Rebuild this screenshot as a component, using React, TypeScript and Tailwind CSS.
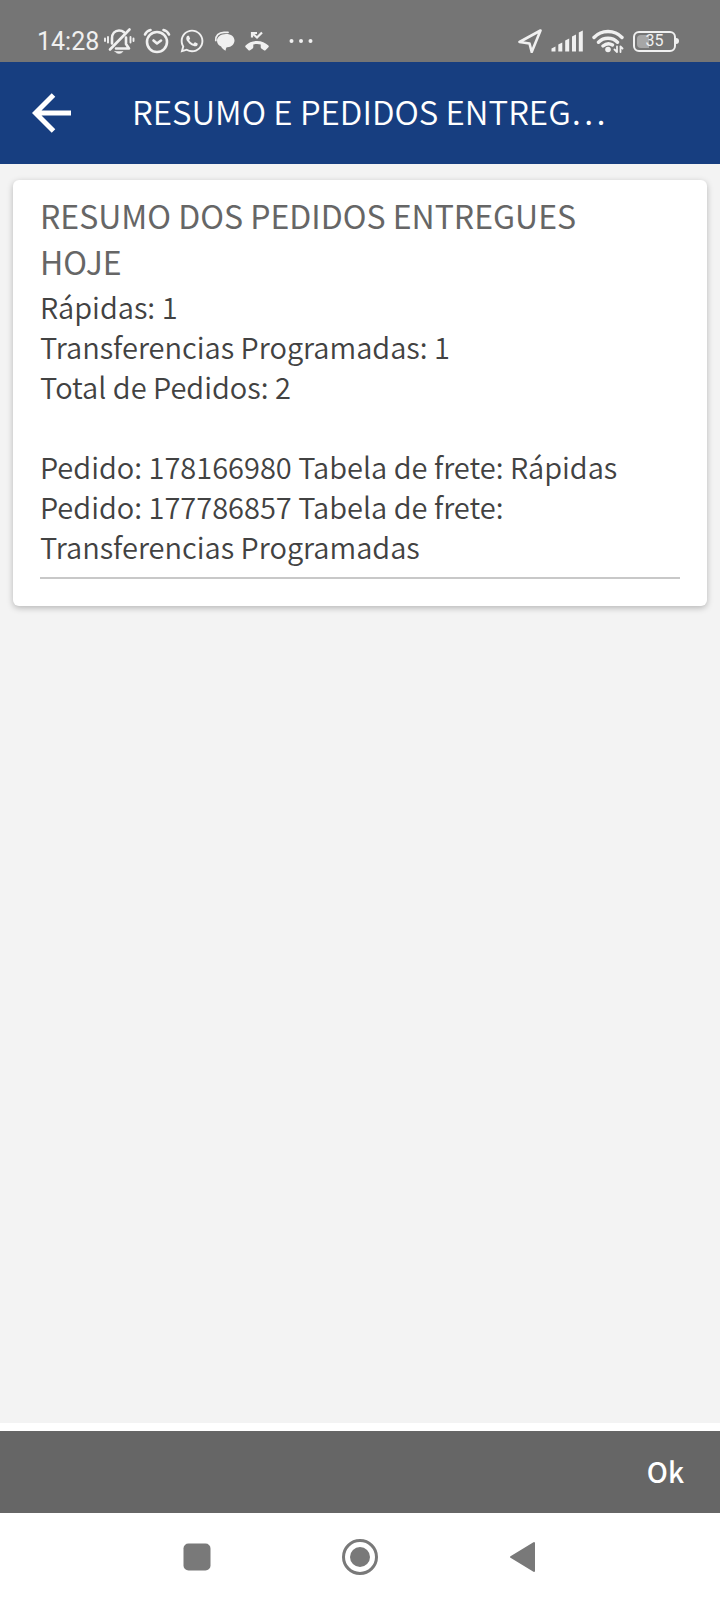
import type { ReactNode } from 'react';
import { FaWhatsapp } from 'react-icons/fa';

const summary = [
  { label: 'Rápidas', total: 1 },
  { label: 'Transferencias Programadas', total: 1 },
  { label: 'Total de Pedidos', total: 2 },
];

const orders = [
  { id: '178166980', table: 'Rápidas' },
  { id: '177786857', table: 'Transferencias Programadas' },
];

function Icon({ className, viewBox, children }: { className: string; viewBox: string; children: ReactNode }) {
  return (
    <svg
      className={className}
      viewBox={viewBox}
      fill="none"
      stroke="currentColor"
      strokeWidth="2.6"
      strokeLinecap="round"
      strokeLinejoin="round"
      aria-hidden="true"
    >
      {children}
    </svg>
  );
}

function BellOffIcon() {
  return (
    <Icon className="h-7 w-8 shrink-0" viewBox="0 0 32 28">
      <path d="M9 16.500V11.500C9 6.500 12 3.500 16 3.500c2 0 3.700.6 5 1.800M23 10.500v6.500l3 4.500H13" />
      <path d="M26.500 2.500 7 22.500" />
      <path d="M12 24.500h8c-1 1.300-2.500 2-4 2s-3-.7-4-2Z" fill="currentColor" strokeWidth="0.500" />
      <path d="M5 10v5.500M2 11.500v2.500M27.500 10v5.500M30.500 11.500v2.500" strokeWidth="1.900" />
    </Icon>
  );
}

function AlarmIcon() {
  return (
    <Icon className="h-7 w-7 shrink-0" viewBox="0 0 28 28">
      <circle cx="14" cy="15" r="10" />
      <path d="m10.500 13.500 3.500 3 4-3" />
      <path d="M2 7.500Q3.500 4 7.500 3M26 7.500Q24.500 4 20.500 3" />
    </Icon>
  );
}

function ChatIcon() {
  return (
    <Icon className="h-6 w-6 shrink-0" viewBox="0 0 24 24">
      <path d="M2.800 11.500C2.300 7 5.800 3.300 11 3.300h4" strokeWidth="1.800" />
      <path
        d="M13 5c5.200 0 8.500 2.700 8.500 6.500s-3.200 6.500-7 6.800c-.7 0-1.200.2-1.400.9l-.6 2.600c-2.200-1.200-3.600-2.800-4.400-4.300-2.600-1-4.100-3.100-4.100-5.700C4 7.900 7.800 5 13 5Z"
        fill="currentColor"
        stroke="none"
      />
    </Icon>
  );
}

function MissedCallIcon() {
  return (
    <Icon className="h-6 w-6 shrink-0" viewBox="0 0 24 24">
      <path
        d="M12 12c-4.500 0-8.500 1.700-11.400 4.600-.5.5-.5 1.200 0 1.700l2.900 2.900c.4.4 1.100.5 1.600.1l2.600-1.900c.4-.3.6-.7.6-1.100v-2.900c2.400-.7 5-.7 7.400 0v2.900c0 .4.200.8.600 1.100l2.600 1.900c.5.4 1.200.3 1.600-.1l2.900-2.900c.5-.5.5-1.200 0-1.700C20.500 13.700 16.500 12 12 12Z"
        fill="currentColor"
        stroke="none"
      />
      <path d="M7 8.500V4h5M7.500 4.500l4.500 4 5-5" strokeWidth="2.200" strokeLinecap="butt" strokeLinejoin="miter" />
    </Icon>
  );
}

function MoreIcon() {
  return (
    <Icon className="h-6 w-6 shrink-0" viewBox="0 0 24 24">
      <g fill="currentColor" stroke="none">
        <circle cx="2.500" cy="12" r="2" />
        <circle cx="12" cy="12" r="2" />
        <circle cx="21.500" cy="12" r="2" />
      </g>
    </Icon>
  );
}

function LocationIcon() {
  return (
    <Icon className="h-6 w-6 shrink-0" viewBox="0 0 24 24">
      <path d="M22.500 1.500 1.500 13l10 1.500 2.200 8.500Z" />
    </Icon>
  );
}

function SignalIcon() {
  return (
    <Icon className="h-6 w-8 shrink-0" viewBox="0 0 32 24">
      <path
        d="M.5 19.500 4.500 17.500V22.500H.5ZM7.300 15.500l4-2v9h-4ZM14.200 11.500l4-2v13h-4ZM21 7.500l4-2v17h-4ZM27.800 3.500l4-2v21h-4Z"
        fill="currentColor"
        stroke="none"
      />
    </Icon>
  );
}

function WifiIcon() {
  return (
    <Icon className="h-6 w-8 shrink-0" viewBox="0 0 32 24">
      <path d="M2 8.500C9.500.5 22.500.5 30 8.500M6.500 13.200c5.300-5.200 13.700-5.200 19 0M11 17c3-2.500 6.500-2.800 9.500-1" strokeWidth="3.400" />
      <circle cx="16" cy="20.500" r="2.800" fill="currentColor" stroke="none" />
      <path d="M25 17.500v5.500M22.500 20.500 25 23M28.500 23v-5.500M28.500 17.500l2 2" strokeWidth="1.800" />
    </Icon>
  );
}

function Battery({ level }: { level: number }) {
  return (
    <div className="flex items-center" role="img" aria-label={`Bateria ${level}%`}>
      <div className="flex h-[21px] w-[43px] rounded-md border-2 border-[#f0f0f0] p-[2px]">
        <div className="grid flex-1 items-center">
          <div className="col-start-1 row-start-1 h-full rounded-l-sm bg-[#a6a6a6]" style={{ width: `${level}%` }} />
          <span className="col-start-1 row-start-1 text-center text-[16px] leading-3">{level}</span>
        </div>
      </div>
      <div className="h-[6px] w-[3px] rounded-r-sm bg-[#f0f0f0]" />
    </div>
  );
}

function StatusBar() {
  return (
    <div className="flex h-[62px] items-end justify-between bg-[#757575] pr-[41px] pb-[7px] pl-[37px] font-[Roboto,sans-serif] text-[#f0f0f0]">
      <div className="flex h-7 items-center">
        <span className="pt-px text-[25px] leading-7">14:28</span>
        <div className="ml-1 flex items-center gap-2">
          <BellOffIcon />
          <AlarmIcon />
          <FaWhatsapp className="size-[26px] shrink-0" aria-hidden="true" />
          <ChatIcon />
          <MissedCallIcon />
        </div>
        <div className="ml-5">
          <MoreIcon />
        </div>
      </div>
      <div className="flex h-7 items-center gap-[9px]">
        <LocationIcon />
        <SignalIcon />
        <WifiIcon />
        <Battery level={35} />
      </div>
    </div>
  );
}

function Header() {
  return (
    <header className="flex h-[102px] items-center bg-[#173e80] px-8 text-white">
      <button type="button" aria-label="Voltar">
        <svg className="size-10" viewBox="0 0 40 40" fill="none" stroke="currentColor" strokeWidth="5" aria-hidden="true">
          <path d="M39 20H4M21.500 2 3.500 20l18 18" />
        </svg>
      </button>
      <h1 className="ml-[60px] pb-1 text-[33px] leading-[46px] font-[350] whitespace-nowrap">RESUMO E PEDIDOS ENTREG…</h1>
    </header>
  );
}

function SummaryCard() {
  return (
    <section className="rounded-md bg-white px-[27px] pt-3 pb-[27px] shadow-[0_2px_6px_rgba(0,0,0,0.25)]">
      <h2 className="pr-10 pb-[2px] text-[32px] leading-[46px] text-[#666666]">RESUMO DOS PEDIDOS ENTREGUES HOJE</h2>
      <div className="border-b-2 border-[#c8c8c8] pb-[11px] text-[29px] leading-10 font-[350] text-[#424242]">
        {summary.map((item) => (
          <p key={item.label}>
            {item.label}: {item.total}
          </p>
        ))}
        <div className="mt-10">
          {orders.map((order) => (
            <p key={order.id}>
              Pedido: {order.id} Tabela de frete: {order.table}
            </p>
          ))}
        </div>
      </div>
    </section>
  );
}

function NavigationBar() {
  return (
    <nav className="flex h-[87px] items-center justify-center gap-[127px] bg-white text-[#797979]">
      <button type="button" aria-label="Recentes">
        <svg className="size-9" viewBox="0 0 36 36" fill="currentColor" aria-hidden="true">
          <rect x="4.500" y="4.500" width="27" height="27" rx="5" />
        </svg>
      </button>
      <button type="button" aria-label="Início">
        <svg className="size-9" viewBox="0 0 36 36" fill="currentColor" aria-hidden="true">
          <circle cx="18" cy="18" r="16.500" fill="none" stroke="currentColor" strokeWidth="3" />
          <circle cx="18" cy="18" r="10" />
        </svg>
      </button>
      <button type="button" aria-label="Voltar">
        <svg className="size-9" viewBox="0 0 36 36" fill="currentColor" stroke="currentColor" strokeWidth="2" strokeLinejoin="round" aria-hidden="true">
          <path d="M29 4v28L6 18Z" />
        </svg>
      </button>
    </nav>
  );
}

export default function App() {
  return (
    <div className="flex min-h-screen flex-col bg-[#f3f3f3] font-['Noto_Sans_CJK_SC',sans-serif]" lang="pt-BR">
      <StatusBar />
      <Header />
      <main className="flex-1 px-[13px] py-4">
        <SummaryCard />
      </main>
      <footer>
        <div className="flex h-[90px] items-center justify-end border-t-8 border-white bg-[#666666] px-9">
          <button type="button" className="pb-[2px] text-[28px] leading-10 font-medium text-white">
            Ok
          </button>
        </div>
        <NavigationBar />
      </footer>
    </div>
  );
}
